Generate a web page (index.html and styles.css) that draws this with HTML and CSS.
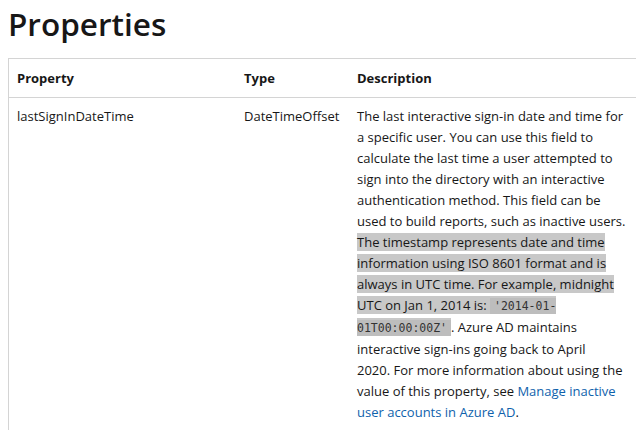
FILE: index.html
```html
<!DOCTYPE html>
<html lang="en">
<head>
<meta charset="utf-8">
<title>Properties</title>
<link rel="stylesheet" href="styles.css">
</head>
<body>
<main class="content">
  <h2 class="heading">Properties</h2>
  <table class="props">
    <thead>
      <tr>
        <th class="col-prop">Property</th>
        <th class="col-type">Type</th>
        <th class="col-desc">Description</th>
      </tr>
    </thead>
    <tbody>
      <tr>
        <td>lastSignInDateTime</td>
        <td>DateTimeOffset</td>
        <td>The last interactive sign-in date and time for a specific user. You can use this field to calculate the last time a user attempted to sign into the directory with an interactive authentication method. This field can be used to build reports, such as inactive users. <span class="sel">The timestamp represents date and time information using ISO 8601 format and is always in UTC time. For example, midnight UTC on Jan 1, 2014 is: <code>'2014-01-01T00:00:00Z'</code></span>. Azure AD maintains interactive sign-ins going back to April<br>2020. For more information about using the value of this property, see <a href="#" class="link">Manage inactive user accounts in Azure AD</a>.</td>
      </tr>
    </tbody>
  </table>
</main>
</body>
</html>
```
FILE: styles.css
```css
html, body {
  margin: 0;
  padding: 0;
  overflow: hidden;
  background: #ffffff;
}
body {
  font-family: "Open Sans", "Liberation Sans", sans-serif;
  color: #171717;
  font-size: 13px;
  line-height: 21px;
}
.content {
  padding: 0 0 0 8px;
}
.heading {
  margin: 0;
  padding-top: 2px;
  font-size: 31.5px;
  line-height: 44px;
  font-weight: 600;
  height: 56px;
}
.props {
  border-collapse: collapse;
  border-left: 1px solid #d4d4d4;
  border-top: 1px solid #d4d4d4;
  table-layout: fixed;
  width: 633px;
}
.props th {
  text-align: left;
  font-weight: 700;
  padding: 9px 8px 8px 8px;
  border-bottom: 1px solid #d4d4d4;
  height: 20px;
}
.col-prop { width: 211px; }
.col-type { width: 97px; }
.col-desc { width: 276px; }
.props td {
  vertical-align: top;
  padding: 8px 8px 8px 8px;
}
.sel {
  background: #c8c8c8;
}
code {
  font-family: "DejaVu Sans Mono", "Liberation Mono", monospace;
  font-size: 11.5px;
  background: #bdbdbd;
  color: #333;
  padding: 1px 4px;
}
.link {
  color: #0f62ac;
  text-decoration: none;
}
```
